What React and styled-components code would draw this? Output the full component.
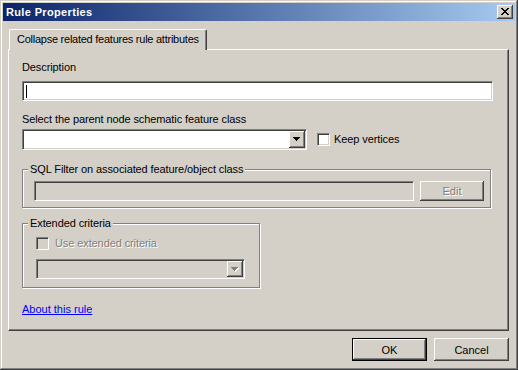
import React from "react";
import styled, { createGlobalStyle, css } from "styled-components";

const FACE = "#D4D0C8";

const GlobalStyle = createGlobalStyle`
  html, body { margin: 0; padding: 0; background: ${FACE}; }
  body { font-family: "Liberation Sans", Arial, sans-serif; font-size: 11px; color: #000; }
  * { box-sizing: border-box; }
`;

const raised = css`
  background: ${FACE};
  box-shadow: inset -1px -1px #404040, inset 1px 1px #fff, inset -2px -2px #808080, inset 2px 2px ${FACE};
`;

const sunken = css`
  border: 1px solid;
  border-color: #808080 #fff #fff #808080;
  box-shadow: inset 1px 1px #404040, inset -1px -1px ${FACE};
`;

const Window = styled.div`
  width: 518px;
  height: 370px;
  padding: 3px;
  background: ${FACE};
  box-shadow: inset -1px -1px #404040, inset 1px 1px ${FACE}, inset -2px -2px #808080, inset 2px 2px #fff;
  display: flex;
  flex-direction: column;
`;

const TitleBar = styled.div`
  height: 18px;
  flex: none;
  display: flex;
  align-items: center;
  padding: 0 2px 0 3px;
  background: linear-gradient(to right, #0A246A, #A6CAF0);
  color: #fff;
  font-weight: bold;
  font-size: 11px;
`;

const TitleText = styled.span`
  flex: 1;
  line-height: 13px;
  letter-spacing: 0.35px;
`;

const CloseButton = styled.div`
  width: 16px;
  height: 14px;
  ${raised};
  display: flex;
  align-items: center;
  justify-content: center;
  padding-bottom: 1px;
`;

const Body = styled.div`
  flex: 1;
  display: flex;
  flex-direction: column;
  padding: 8px 6px 6px 5px;
`;

const TabStrip = styled.div`
  display: flex;
  padding-left: 1px;
  position: relative;
  z-index: 1;
  margin-bottom: -1px;
`;

const Tab = styled.div`
  height: 21px;
  width: 198px;
  padding: 0 0 1px 7px;
  border-top: 1px solid #fff;
  border-left: 1px solid #fff;
  border-right: 1px solid #404040;
  border-radius: 2px 2px 0 0;
  box-shadow: inset -1px 0 #808080;
  background: ${FACE};
  display: flex;
  align-items: center;
  white-space: nowrap;
  line-height: 13px;
  letter-spacing: -0.25px;
`;

const Panel = styled.div`
  height: 282px;
  border-top: 1px solid #fff;
  border-left: 1px solid #fff;
  border-right: 1px solid #404040;
  border-bottom: 1px solid #404040;
  box-shadow: inset -1px -1px #808080;
  padding: 11px 15px 0 13px;
  display: flex;
  flex-direction: column;
  align-items: flex-start;
`;

const Label = styled.div`
  line-height: 13px;
  margin-top: ${(p) => p.$top || 0}px;
  white-space: nowrap;
  letter-spacing: -0.1px;
`;

const TextBox = styled.div`
  ${sunken};
  height: 20px;
  width: ${(p) => (p.$w ? `${p.$w}px` : "100%")};
  flex: ${(p) => (p.$grow ? 1 : "none")};
  margin-top: ${(p) => p.$top || 0}px;
  background: ${(p) => (p.$disabled ? FACE : "#fff")};
  display: flex;
  align-items: center;
  padding-left: 3px;
`;

const Caret = styled.span`
  width: 1px;
  height: 13px;
  background: #000;
`;

const Row = styled.div`
  display: flex;
  align-items: center;
  margin-top: ${(p) => p.$top || 0}px;
  width: 100%;
`;

const Combo = styled.div`
  ${sunken};
  width: ${(p) => p.$w}px;
  height: ${(p) => p.$h}px;
  background: ${(p) => (p.$disabled ? FACE : "#fff")};
  display: flex;
  justify-content: flex-end;
  align-items: stretch;
  padding: 1px;
  margin-top: ${(p) => p.$top || 0}px;
`;

const DropButton = styled.div`
  width: 16px;
  ${raised};
  display: flex;
  align-items: center;
  justify-content: center;
`;

const Check = styled.span`
  ${sunken};
  width: 13px;
  height: 13px;
  flex: none;
  background: ${(p) => (p.$disabled ? FACE : "#fff")};
  margin-left: ${(p) => p.$left || 0}px;
`;

const CheckText = styled.span`
  margin-left: ${(p) => p.$left}px;
  line-height: 13px;
  white-space: nowrap;
  letter-spacing: -0.1px;
  ${(p) =>
    p.$disabled &&
    css`
      color: #808080;
      text-shadow: 1px 1px 0 #fff;
    `}
`;

const Group = styled.div`
  position: relative;
  border: 1px solid #808080;
  box-shadow: 1px 1px 0 #fff, inset 1px 1px 0 #fff;
  width: ${(p) => p.$w}px;
  height: ${(p) => p.$h}px;
  margin-top: ${(p) => p.$top}px;
  padding: ${(p) => p.$pad};
  display: flex;
  flex-direction: ${(p) => p.$dir || "row"};
  align-items: flex-start;
`;

const Legend = styled.span`
  position: absolute;
  top: -7px;
  left: 5px;
  padding: 0 2px;
  background: ${FACE};
  line-height: 13px;
  white-space: nowrap;
  letter-spacing: -0.1px;
`;

const SmallButton = styled.div`
  width: 64px;
  height: 20px;
  margin-left: 6px;
  flex: none;
  ${raised};
  display: flex;
  align-items: center;
  justify-content: center;
  color: #808080;
  text-shadow: 1px 1px 0 #fff;
`;

const Link = styled.a`
  margin-top: 15px;
  line-height: 13px;
  color: #0000ff;
  text-decoration: underline;
  cursor: pointer;
`;

const ButtonRow = styled.div`
  display: flex;
  justify-content: flex-end;
  gap: 7px;
  margin-top: 7px;
`;

const PushButton = styled.div`
  width: 75px;
  height: 23px;
  display: flex;
  align-items: center;
  justify-content: center;
  background: ${FACE};
  ${(p) =>
    p.$default
      ? css`
          border: 1px solid #000;
          box-shadow: inset -1px -1px #404040, inset 1px 1px #fff, inset -2px -2px #808080;
        `
      : css`
          box-shadow: inset -1px -1px #404040, inset 1px 1px #fff, inset -2px -2px #808080, inset 2px 2px ${FACE};
        `}
`;

const CloseGlyph = () => (
  <svg width="8" height="7" viewBox="0 0 8 7" shapeRendering="crispEdges">
    {[
      [0, 0, 2], [6, 0, 2],
      [1, 1, 2], [5, 1, 2],
      [2, 2, 4],
      [3, 3, 2],
      [2, 4, 4],
      [1, 5, 2], [5, 5, 2],
      [0, 6, 2], [6, 6, 2],
    ].map(([x, y, w], i) => (
      <rect key={i} x={x} y={y} width={w} height={1} fill="#000" />
    ))}
  </svg>
);

const Arrow = ({ disabled }) => {
  const rows = [
    [0, 0, 7],
    [1, 1, 5],
    [2, 2, 3],
    [3, 3, 1],
  ];
  return (
    <svg width="8" height="5" viewBox="0 0 8 5" shapeRendering="crispEdges">
      {disabled &&
        rows.map(([x, y, w], i) => (
          <rect key={"s" + i} x={x + 1} y={y + 1} width={w} height={1} fill="#fff" />
        ))}
      {rows.map(([x, y, w], i) => (
        <rect key={i} x={x} y={y} width={w} height={1} fill={disabled ? "#808080" : "#000"} />
      ))}
    </svg>
  );
};

export default function App() {
  return (
    <>
      <GlobalStyle />
      <Window>
        <TitleBar>
          <TitleText>Rule Properties</TitleText>
          <CloseButton>
            <CloseGlyph />
          </CloseButton>
        </TitleBar>
        <Body>
          <TabStrip>
            <Tab>Collapse related features rule attributes</Tab>
          </TabStrip>
          <Panel>
            <Label>Description</Label>
            <TextBox $top={7}>
              <Caret />
            </TextBox>
            <Label $top={12}>Select the parent node schematic feature class</Label>
            <Row $top={3}>
              <Combo $w={285} $h={21}>
                <DropButton>
                  <Arrow />
                </DropButton>
              </Combo>
              <Check $left={10} />
              <CheckText $left={4}>Keep vertices</CheckText>
            </Row>
            <Group $w={469} $h={39} $top={19} $pad="11px 6px 0 11px">
              <Legend>SQL Filter on associated feature/object class</Legend>
              <TextBox $grow $disabled />
              <SmallButton>Edit</SmallButton>
            </Group>
            <Group $w={238} $h={65} $top={15} $pad="13px 14px 0 13px" $dir="column">
              <Legend>Extended criteria</Legend>
              <Row>
                <Check $disabled />
                <CheckText $left={6} $disabled>
                  Use extended criteria
                </CheckText>
              </Row>
              <Combo $w={209} $h={20} $top={9} $disabled>
                <DropButton>
                  <Arrow disabled />
                </DropButton>
              </Combo>
            </Group>
            <Link>About this rule</Link>
          </Panel>
          <ButtonRow>
            <PushButton $default>OK</PushButton>
            <PushButton>Cancel</PushButton>
          </ButtonRow>
        </Body>
      </Window>
    </>
  );
}
